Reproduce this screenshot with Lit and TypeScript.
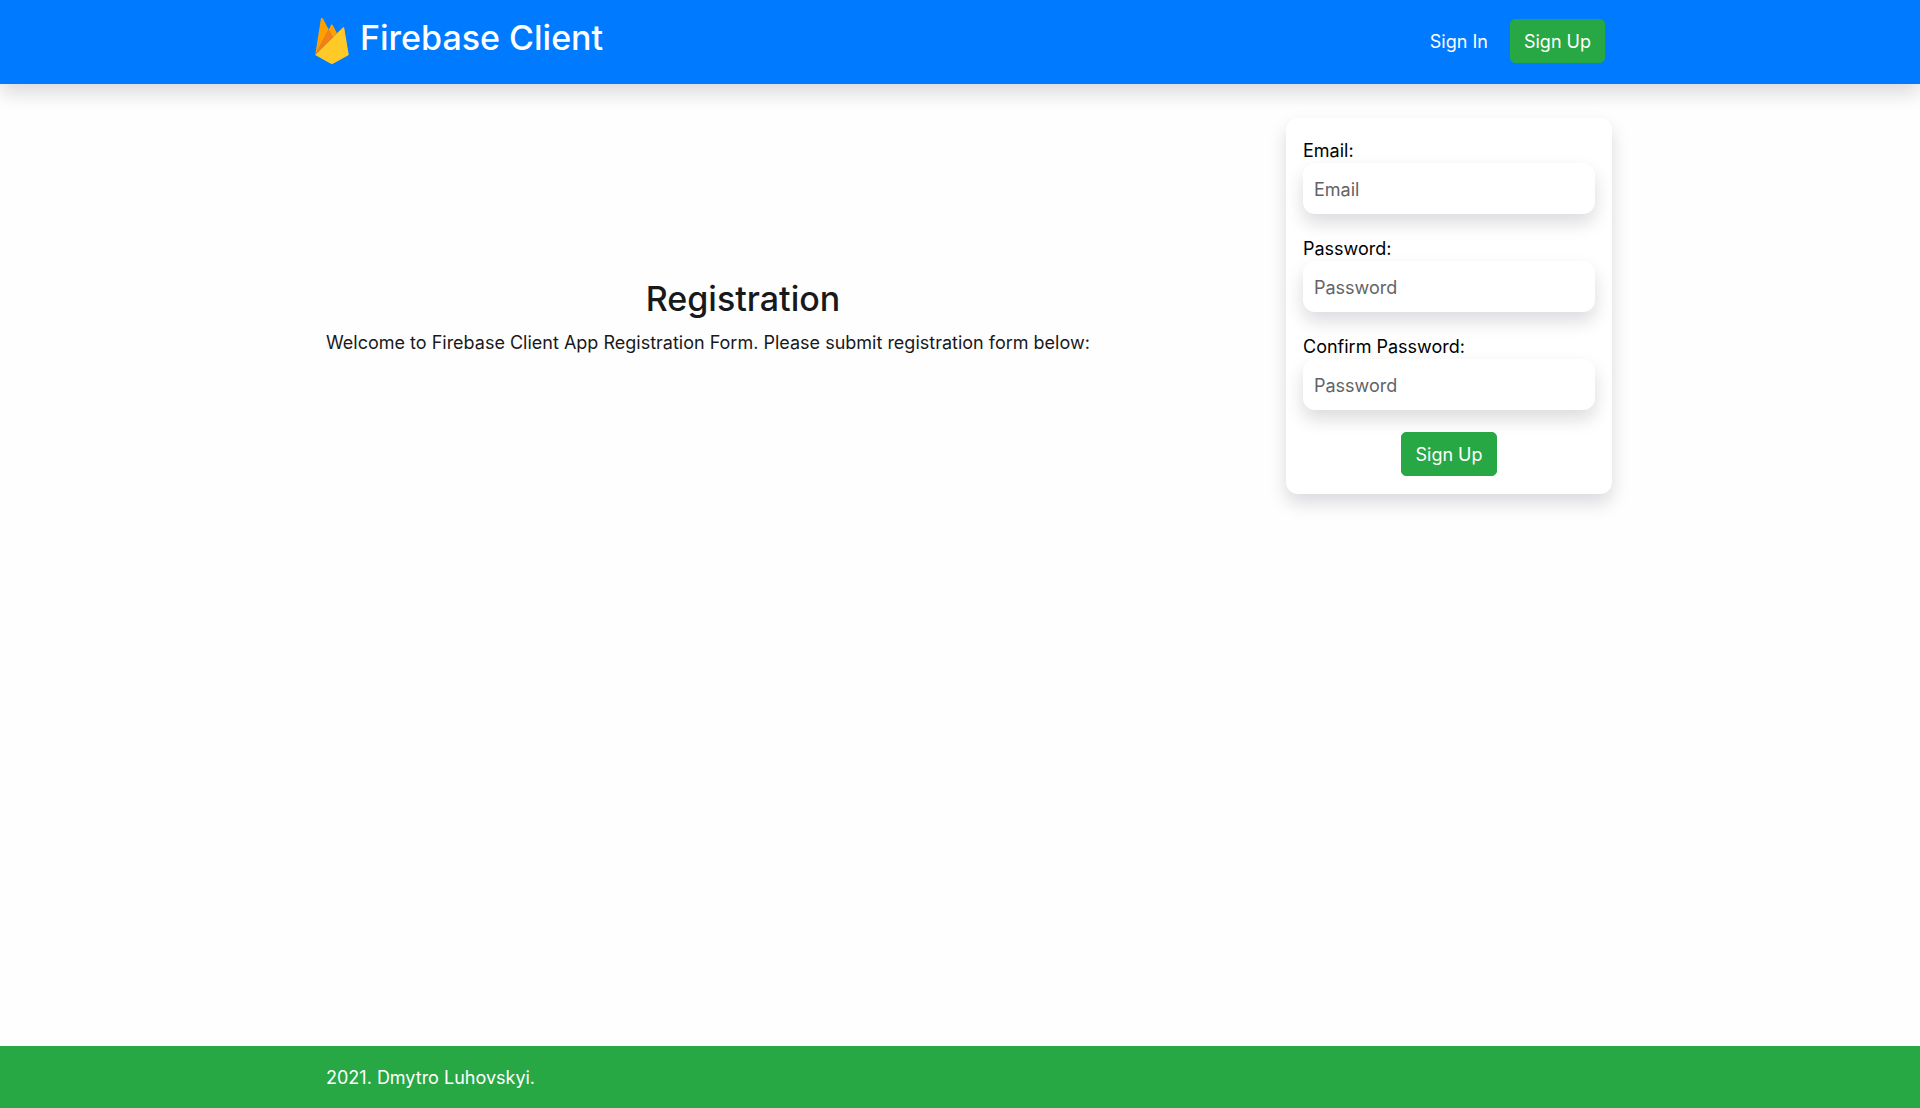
import { LitElement, html, css } from "lit";
import { customElement } from "lit/decorators.js";

interface Field {
  id: string;
  type: string;
  label: string;
  placeholder: string;
}

const FIELDS: Field[] = [
  { id: "email", type: "email", label: "Email:", placeholder: "Email" },
  { id: "password", type: "password", label: "Password:", placeholder: "Password" },
  { id: "confirm", type: "password", label: "Confirm Password:", placeholder: "Password" },
];

@customElement("app-root")
export class AppRoot extends LitElement {
  static styles = css`
    :host {
      display: flex;
      flex-direction: column;
      min-height: 100vh;
      background: #fefefe;
      color: #18191b;
      font-family: Inter, "Liberation Sans", sans-serif;
      font-size: 18px;
      line-height: 27px;
    }
    * {
      box-sizing: border-box;
    }
    .container {
      width: 100%;
      max-width: 1304px;
      margin: 0 auto;
      padding: 0 18px;
    }
    .header {
      background: #007bff;
      box-shadow: 0 9px 18px rgba(20, 10, 25, 0.15);
      padding: 16px 0 18px;
    }
    .bar {
      display: flex;
      align-items: center;
      justify-content: space-between;
      padding: 0 7px;
    }
    .brand {
      display: flex;
      align-items: center;
      gap: 11px;
      color: #fff;
      text-decoration: none;
    }
    .logo {
      width: 34px;
      height: 46px;
    }
    .title {
      margin: 0 0 6px;
      font-size: 34px;
      line-height: 44px;
      font-weight: 500;
    }
    .nav {
      display: flex;
      align-items: baseline;
      gap: 22px;
    }
    .link {
      color: #fff;
      text-decoration: none;
    }
    .button {
      display: inline-block;
      font: inherit;
      color: #fff;
      background: #28a745;
      border: 1px solid #28a745;
      border-radius: 5px;
      padding: 9px 13px 7px;
      line-height: 26px;
      text-decoration: none;
      cursor: pointer;
    }
    .main {
      flex: 1;
    }
    .row {
      display: flex;
      flex-wrap: wrap;
      justify-content: space-between;
      padding: 34px 0 36px 18px;
    }
    .intro {
      flex: 0 1 834px;
      align-self: center;
      padding-top: 20px;
    }
    .heading {
      margin: 0 0 8px;
      font-size: 34px;
      line-height: 44px;
      font-weight: 500;
      text-align: center;
    }
    .lead {
      margin: 0;
    }
    .card {
      flex: 0 0 326px;
      display: flex;
      flex-direction: column;
      padding: 18px 17px;
      border-radius: 12px;
      background: #fff;
      box-shadow: 0 9px 18px rgba(20, 10, 25, 0.15);
    }
    .field {
      display: flex;
      flex-direction: column;
      margin-bottom: 20px;
      color: #000;
    }
    .label {
      padding-top: 2px;
      line-height: 25px;
    }
    .input {
      width: 100%;
      height: 51px;
      font: inherit;
      color: #000;
      border: 0;
      border-radius: 12px;
      padding: 2px 11px 0;
      background: #fff;
      box-shadow: 0 9px 18px rgba(20, 10, 25, 0.15);
    }
    .input::placeholder {
      color: #636366;
      opacity: 1;
    }
    .submit {
      align-self: center;
      margin-top: 2px;
    }
    .footer {
      background: #28a745;
      color: #fff;
      padding: 18px 0 17px;
    }
  `;

  render() {
    return html`
      <header class="header">
        <div class="container bar">
          <a class="brand" href="#">
            <svg class="logo" viewBox="0 0 256 351" aria-hidden="true">
              <path fill="#ffa000" d="M0 283L43 7C44-1 54-3 58 4l45 84z" />
              <path fill="#ffa000" d="M134 149l32-33-32-61c-3-6-10-6-13-1l-19 35z" />
              <path fill="#f57f17" d="M0 283l134-134-32-62z" />
              <path
                fill="#ffca28"
                d="M139 348l117-65-34-205c-1-6-9-9-13-4L0 283l116 65a24 24 0 0 0 23 0z"
              />
            </svg>
            <h1 class="title">Firebase Client</h1>
          </a>
          <nav class="nav">
            <a class="link" href="#signin">Sign In</a>
            <a class="button" href="#signup">Sign Up</a>
          </nav>
        </div>
      </header>
      <main class="main">
        <div class="container row">
          <section class="intro">
            <h2 class="heading">Registration</h2>
            <p class="lead">
              Welcome to Firebase Client App Registration Form. Please submit registration form below:
            </p>
          </section>
          <form class="card" @submit=${(e: Event) => e.preventDefault()}>
            ${FIELDS.map(
              (f) => html`
                <div class="field">
                  <label class="label" for=${f.id}>${f.label}</label>
                  <input class="input" id=${f.id} type=${f.type} placeholder=${f.placeholder} />
                </div>
              `
            )}
            <button class="button submit" type="submit">Sign Up</button>
          </form>
        </div>
      </main>
      <footer class="footer">
        <div class="container">2021. Dmytro Luhovskyi.</div>
      </footer>
    `;
  }
}
